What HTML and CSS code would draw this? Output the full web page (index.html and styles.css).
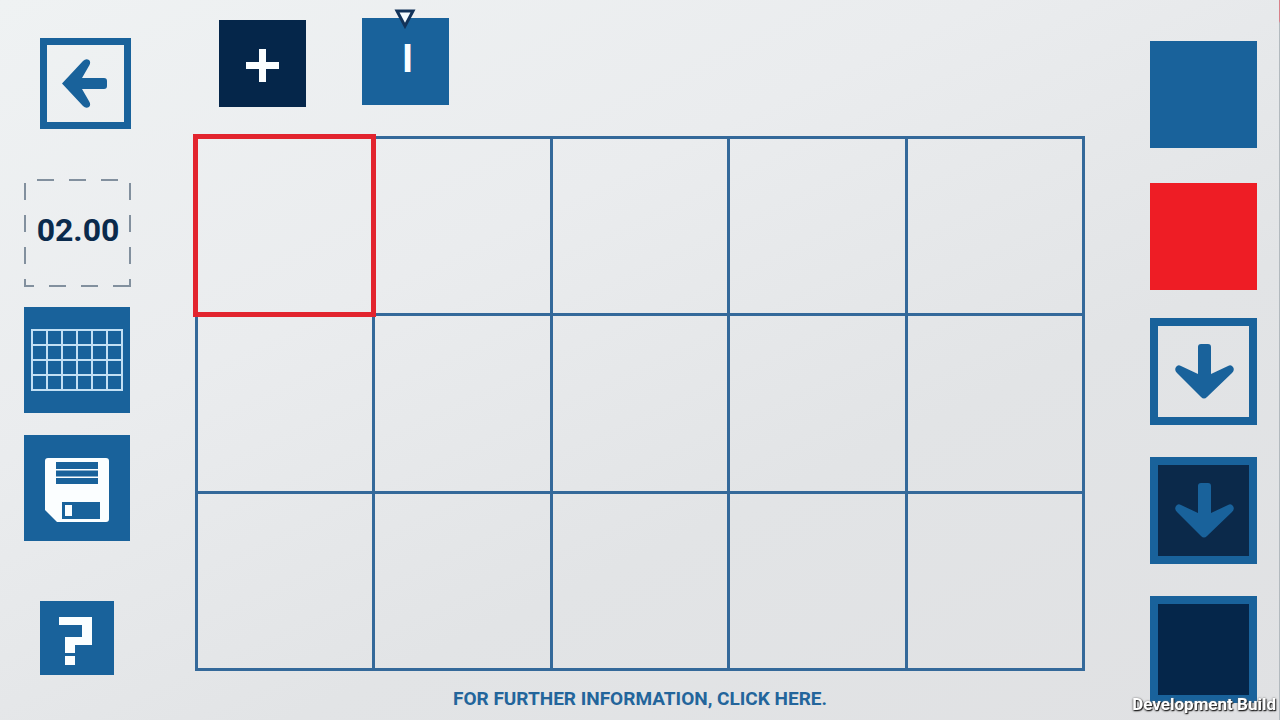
FILE: index.html
```html
<!DOCTYPE html>
<html lang="en">
<head>
<meta charset="utf-8">
<title>Grid editor</title>
<link rel="stylesheet" href="styles.css">
</head>
<body>
<div class="app">
  <nav class="tools" aria-label="Tools">
    <button class="tile tile-back" aria-label="Back">
      <svg viewBox="0 0 91 91"><path class="fill-blue" d="M22 45.500L43 23Q46 20 49 22Q51 24 49.500 27L42 40H64Q67 40 67 43V48Q67 51 64 51H42L49.500 64Q51 67 49 69Q46 71 43 68Z"/></svg>
    </button>
    <button class="timer">
      <svg class="timer-frame" viewBox="0 0 108 108" aria-hidden="true">
        <path d="M13 1H95M1 4V86M106 4V86M25 107H75" stroke-dasharray="17 15"/>
        <path d="M1 100V107H10M89 107H106V100"/>
      </svg>
      <span>02.00</span>
    </button>
    <button class="tile tile-grid" aria-label="Grid size">
      <svg viewBox="0 0 106 106"><path class="grid-lines" d="M8 23H98V83H8ZM8 38H98M8 53H98M8 68H98M23 23V83M38 23V83M53 23V83M68 23V83M83 23V83"/></svg>
    </button>
    <button class="tile tile-save" aria-label="Save">
      <svg viewBox="0 0 106 106">
        <path class="fill-white" d="M24 23H82Q85 23 85 26V84Q85 87 82 87H33L21 75V26Q21 23 24 23Z"/>
        <path class="fill-blue" d="M32 27H74V34H32ZM32 35.500H74V41.500H32ZM32 43H74V49H32ZM38 67H76V84H38Z"/>
        <path class="fill-white" d="M41 70H48V81H41Z"/>
      </svg>
    </button>
    <button class="tile tile-help" aria-label="Help">
      <svg viewBox="0 0 74 74"><path class="fill-white" d="M19 16H52V44H35V52H25V36H42V24H19ZM25 55H35V64H25Z"/></svg>
    </button>
  </nav>

  <main class="stage">
    <div class="frames">
      <button class="frame frame-add" aria-label="Add frame">
        <svg viewBox="0 0 87 87"><path class="fill-white" d="M40 29H47V42H60V49H47V62H40V49H27V42H40Z"/></svg>
      </button>
      <button class="frame frame-current">I
        <svg class="marker" viewBox="0 0 22 20" aria-hidden="true"><path d="M3 2H19L11 17Z"/></svg>
      </button>
    </div>
    <div class="board">
      <button class="cell cell-selected" aria-label="Row 1, column 1"></button>
      <button class="cell" aria-label="Row 1, column 2"></button>
      <button class="cell" aria-label="Row 1, column 3"></button>
      <button class="cell" aria-label="Row 1, column 4"></button>
      <button class="cell" aria-label="Row 1, column 5"></button>
      <button class="cell" aria-label="Row 2, column 1"></button>
      <button class="cell" aria-label="Row 2, column 2"></button>
      <button class="cell" aria-label="Row 2, column 3"></button>
      <button class="cell" aria-label="Row 2, column 4"></button>
      <button class="cell" aria-label="Row 2, column 5"></button>
      <button class="cell" aria-label="Row 3, column 1"></button>
      <button class="cell" aria-label="Row 3, column 2"></button>
      <button class="cell" aria-label="Row 3, column 3"></button>
      <button class="cell" aria-label="Row 3, column 4"></button>
      <button class="cell" aria-label="Row 3, column 5"></button>
    </div>
    <a class="info" href="#info">FOR FURTHER INFORMATION, CLICK HERE.</a>
  </main>

  <aside class="palette" aria-label="Palette">
    <button class="swatch swatch-blue" aria-label="Blue"></button>
    <button class="swatch swatch-red" aria-label="Red"></button>
    <button class="swatch swatch-outline" aria-label="Arrow on light">
      <svg viewBox="0 0 107 107"><path class="fill-blue" d="M48 29Q48 26 51 26H58Q61 26 61 29V56L78 48Q81 46 83 49Q85 52 82 55L57 79Q54 82 51 79L27 55Q24 52 26 49Q28 46 31 48L48 56Z"/></svg>
    </button>
    <button class="swatch swatch-outline swatch-dim" aria-label="Arrow on dark">
      <svg viewBox="0 0 107 107"><path class="fill-blue" d="M48 29Q48 26 51 26H58Q61 26 61 29V56L78 48Q81 46 83 49Q85 52 82 55L57 79Q54 82 51 79L27 55Q24 52 26 49Q28 46 31 48L48 56Z"/></svg>
    </button>
    <button class="swatch swatch-outline swatch-navy" aria-label="Navy"></button>
  </aside>
</div>
<div class="build">Development Build</div>
</body>
</html>
```
FILE: styles.css
```css
:root {
  --blue: #19629b;
  --navy: #05264a;
  --red: #ee1d25;
  --line: #34699a;
}

* { box-sizing: border-box; }

body {
  margin: 0;
  font-family: Roboto, "Liberation Sans", sans-serif;
  background: linear-gradient(155deg, #eff2f3 0%, #eaecee 35%, #e2e4e6 65%, #e0e1e3 100%);
}

button {
  position: relative;
  display: block;
  padding: 0;
  border: 0;
  background: none;
  font: inherit;
  cursor: pointer;
}

svg { display: block; }

.app {
  display: grid;
  grid-template-columns: 195px 1fr 194px;
  min-height: 100vh;
  border-right: 1px solid #b3babf;
  border-image: linear-gradient(#d9808a 0 22px, #b3babf 24px) 1;
}

.fill-blue { fill: var(--blue); }
.fill-white { fill: #fbfeff; }

.tools {
  display: flex;
  flex-direction: column;
  align-items: flex-start;
  padding: 38px 0 0 24px;
}

.tile {
  width: 106px;
  aspect-ratio: 1;
  background: var(--blue);
}

.tile-back {
  width: 91px;
  margin: 0 0 50px 16px;
  background: none;
  box-shadow: inset 0 0 0 7px var(--blue);
}

.timer {
  display: grid;
  place-items: center;
  width: 108px;
  aspect-ratio: 1;
  margin-bottom: 20px;
  padding-bottom: 6px;
  font-size: 32px;
  font-weight: 700;
  line-height: 40px;
  color: #0a2a4c;
}

.timer-frame {
  position: absolute;
  inset: 0;
  fill: none;
  stroke: #82909e;
  stroke-width: 2px;
}

.tile-grid { margin-bottom: 22px; }

.grid-lines {
  fill: none;
  stroke: #c3e0f4;
  stroke-width: 2px;
}

.tile-save { margin-bottom: 60px; }

.tile-help {
  width: 74px;
  margin-left: 16px;
}

.stage {
  display: flex;
  flex-direction: column;
}

.frames {
  display: flex;
  align-items: flex-start;
  gap: 56px;
  height: 136px;
  padding: 18px 0 0 24px;
}

.frame {
  width: 87px;
  aspect-ratio: 1;
}

.frame-add {
  margin-top: 2px;
  background: var(--navy);
}

.frame-current {
  padding: 0 0 6px 4px;
  background: var(--blue);
  color: #fbfeff;
  font-size: 38px;
  font-weight: 700;
  line-height: 40px;
}

.marker {
  position: absolute;
  top: -9px;
  left: 32px;
  width: 22px;
  fill: #f4fbff;
  stroke: #12335a;
  stroke-width: 3px;
}

.board {
  display: grid;
  grid-template-columns: repeat(5, 1fr);
  border: solid var(--line);
  border-width: 3px 0 0 3px;
}

.cell {
  aspect-ratio: 1;
  border: solid var(--line);
  border-width: 0 3px 3px 0;
}

.cell-selected { z-index: 1; }

.cell-selected::after {
  content: "";
  position: absolute;
  inset: -5px -4px -4px -5px;
  border: 5px solid #e2242e;
}

.info {
  align-self: center;
  margin-top: 16px;
  color: #23659b;
  font-size: 19px;
  font-weight: 700;
  line-height: 24px;
  text-decoration: none;
  white-space: nowrap;
}

.palette {
  display: flex;
  flex-direction: column;
  align-items: flex-end;
  gap: 32px;
  padding: 41px 22px 16px 0;
}

.swatch {
  width: 107px;
  aspect-ratio: 1;
}

.swatch-blue { background: var(--blue); }
.swatch-red { margin-top: 3px; margin-bottom: -4px; background: var(--red); }
.swatch-outline { box-shadow: inset 0 0 0 8px var(--blue); }
.swatch-dim { background: #0b294a; }
.swatch-navy { background: var(--navy); }

.build {
  position: fixed;
  right: 4px;
  bottom: 4px;
  color: #fff;
  font-size: 17px;
  font-weight: 700;
  line-height: 24px;
  text-shadow: 1px 1px 1px #222, 0 0 2px #777, 0 1px 2px #444;
}
```
